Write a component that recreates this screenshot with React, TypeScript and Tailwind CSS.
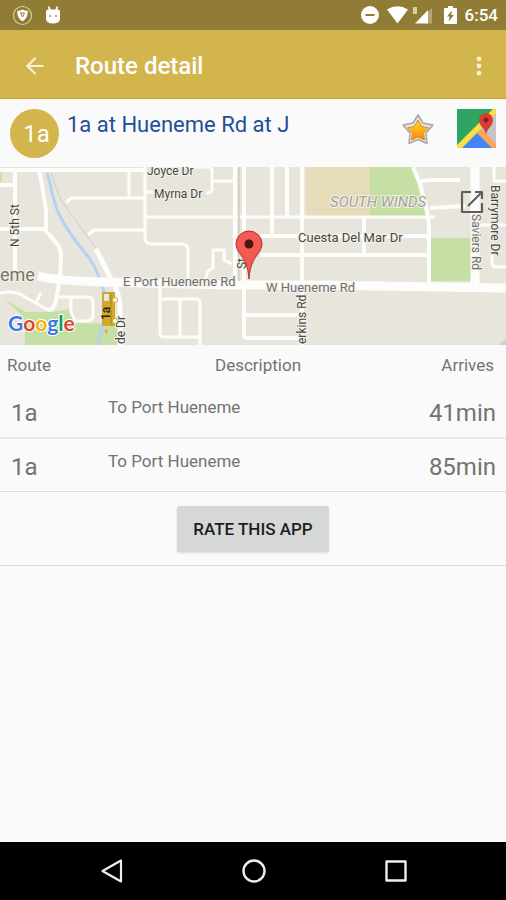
import { ArrowLeft } from "lucide-react";

type arrivalProps = {
  route: string;
  description: string;
  arrives: string;
}

function StatusBar() {
  return (
    <div className="flex h-[30px] items-center justify-between bg-[#917c35] px-2 text-white">
      <div className="flex items-center gap-3 pl-1">
        <svg width="21" height="21" viewBox="0 0 21 21" aria-hidden="true">
          <circle cx="10.5" cy="10.5" r="9" fill="none" stroke="#d9cda6" strokeWidth="1.2" />
          <path d="M10.5 4.5c1.6 1 3.4 1.2 5.2 1.3.3 5-1.5 8.500-5.200 10.500-3.700-2-5.500-5.500-5.200-10.500 1.800-.1 3.600-.3 5.200-1.300z" fill="#fff" />
          <path d="M8.500 8l2 4 2-4z" fill="none" stroke="#917c35" strokeWidth="1" />
        </svg>
        <svg width="16" height="18" viewBox="0 0 16 18" aria-hidden="true">
          <path d="M3.500 0.500l1.500 4M12.500 0.500l-1.500 4" stroke="#fff" strokeWidth="1.800" />
          <path d="M3 3.500h10q2 0 2 2v7q0 5-7 5t-7-5v-7q0-2 2-2z" fill="#fff" />
          <circle cx="5" cy="10" r="0.900" fill="#917c35" />
          <circle cx="11" cy="10" r="0.900" fill="#917c35" />
        </svg>
      </div>
      <div className="flex items-center gap-2">
        <svg width="18" height="18" viewBox="0 0 18 18" aria-hidden="true">
          <circle cx="9" cy="9" r="9" fill="#fff" />
          <path d="M4.500 9h9" stroke="#917c35" strokeWidth="2" />
        </svg>
        <svg width="21" height="18" viewBox="0 0 21 18" aria-hidden="true">
          <path d="M0 3.500Q10.500-3 21 3.500L10.500 17.500z" fill="#fff" />
        </svg>
        <svg width="20" height="18" viewBox="0 0 20 18" className="-ml-1" aria-hidden="true">
          <path d="M1 1h4v7h-4z" fill="#d9cda6" />
          <path d="M20 2v15.500h-5v-11z" fill="#b5a672" />
          <path d="M16 4v13.500h-13z" fill="#fff" />
        </svg>
        <svg width="13" height="18" viewBox="0 0 13 18" className="ml-1" aria-hidden="true">
          <path d="M4 0h5v2h3q1 0 1 1v14q0 1-1 1h-11q-1 0-1-1v-14q0-1 1-1h3z" fill="#fff" />
          <path d="M8 4.500l-5 6h2.700l-1 5 5.300-6.500h-2.800z" fill="#917c35" />
        </svg>
        <span className="text-[17px] leading-5 font-medium">6:54</span>
      </div>
    </div>
  )
}

function MapView() {
  return (
    <svg className="h-[178px] w-full" viewBox="0 0 506 178" preserveAspectRatio="xMidYMid slice" role="img" aria-label="Map">
      <rect width="506" height="178" fill="#e8e6dc" />
      <path d="M0 3h2v12h-2z" fill="#dfd8a5" />
      <path d="M306 0h65v49h-65z" fill="#e7dcb9" />
      <path d="M370 0h43l13 49h-56z" fill="#c5dfa5" />
      <path d="M431 71h40v43h-40z" fill="#c5dfa5" />
      <path d="M4 132l22 13 24 0 22-3 4 14 43 1v21h-94v-21l-3-9z" fill="#c5dfa5" />
      <path d="M498 178l8-6v6z" fill="#d2d2ce" />

      <path d="M47 6C52 20 52 32 59 47S75 74 90 92c8 12 11 24 16 38M103 156l-5 22" fill="none" stroke="#b5d0f5" strokeWidth="3" />
      <path d="M51 6c4 10 6 20 12 30l33 45" fill="none" stroke="#cfccc2" strokeWidth="1" />

      <g fill="none" stroke="#fdfdfb" strokeWidth="4" strokeLinejoin="round">
        <path d="M0 3h145M15 3v101M0 18h15M0 62h46" />
        <path d="M39 3l3 15 4 25v21l12 14q3 5 3 12l-1 20-4 24q-2 9-8 9" />
        <path d="M0 126q16-3 25 4l23 13M35 137l6-11M58 130h31q4 1 4 7v12q-1 5-6 5h-12l-4-9v-14" strokeWidth="3" />
        <path d="M66 36l5-5h74M88 68l6-5h51M129 3v29M145 0v71q0 5 5 6h33q5 1 5 6v34M145 25h8M145 50h290" strokeWidth="3" />
        <path d="M160 118v48q0 4 5 4h35M160 132h36q4 0 4 5v41M180 132v38" strokeWidth="3" />
        <path d="M185 0h23q4 0 4 4v18q0 4-6 4M213 14h22M205 114l3-10 5-3v-18h11v10l8 4" strokeWidth="3" />
        <path d="M96 82l15 30q9 14 9 30v36" strokeWidth="5" />
        <path d="M235 0v120M244 0v168q0 3 4 3h54M244 148h58M260 69h170M260 88h170" />
        <path d="M272 0v69M287 0v51M302 0v178M364 51v37" />
        <path d="M413 0l7 17 7 27 2 14v60M421 14l10-1h29M430 41l35-2" />
        <path d="M480 58h26M494 0v14h12M492 84v12q0 4 5 4h9" strokeWidth="3" />
        <path d="M475 0v120" strokeWidth="9" />
        <path d="M38 109q20 5 65 6l130 3 80 0 193 3" strokeWidth="9" />
      </g>
      <path d="M239 0v114" stroke="#d7d4ca" strokeWidth="2" />

      <g className="font-[Roboto,sans-serif] text-[12px]" fill="#464646" stroke="#f3f1ea" strokeWidth="2" paintOrder="stroke">
        <text x="147" y="8">Joyce Dr</text>
        <text x="154" y="31">Myrna Dr</text>
        <text x="298" y="75" className="text-[13px]">Cuesta Del Mar Dr</text>
        <text x="123" y="119" fill="#707070" className="text-[13px]">E Port Hueneme Rd</text>
        <text x="266" y="125" fill="#707070" className="text-[13px]">W Hueneme Rd</text>
        <text x="330" y="40" fill="#a5a39b" className="text-[15px] italic">SOUTH WINDS</text>
        <text x="-10" y="114" fill="#7d7463" className="text-[18px]">neme</text>
        <text transform="translate(19 80) rotate(-90)">N 5th St</text>
        <text transform="translate(125 177) rotate(-90)">de Dr</text>
        <text transform="translate(306 177) rotate(-90)">erkins Rd</text>
        <text transform="translate(246 102) rotate(-90)">St</text>
        <text transform="translate(472 47) rotate(90)" fill="#707070">Saviers Rd</text>
        <text transform="translate(491 18) rotate(90)">Barrymore Dr</text>
      </g>

      {/* bus */}
      <path d="M102 125h13v34h-13z" fill="#d3a72b" />
      <path d="M104 127h5v7h-5z" fill="#dbe9f0" />
      <path d="M111 126v32" stroke="#ad861f" />
      <circle cx="115" cy="133" r="2.500" fill="#fff" stroke="#d3a72b" />
      <circle cx="115" cy="154" r="2.500" fill="#fff" stroke="#d3a72b" />
      <path d="M104 164l4-2-1 5z" fill="#e0a52f" />
      <text transform="translate(110 153) rotate(-90)" className="font-[Roboto,sans-serif] text-[12px] font-medium" fill="#222">1a</text>

      {/* marker */}
      <path d="M249 112c-1-13-4-18-8-24-3-4-5-7-5-11a13 13 0 0 1 26 0c0 4-2 7-5 11-4 6-7 11-8 24z" fill="#f25a52" stroke="#b1302b" strokeWidth="1" />
      <circle cx="249" cy="77" r="4.500" fill="#4b1413" />

      {/* open in new */}
      <g fill="none" stroke="#5f5f5f" strokeWidth="2.200" strokeLinejoin="round">
        <path d="M471 25h-9v20h20v-9M475 25h7v7M482 25l-14 14" />
      </g>

      <text x="8" y="164" className="font-[Lato,sans-serif] text-[21px] font-bold" stroke="#fff" strokeWidth="2" paintOrder="stroke">
        <tspan fill="#3b78e7">G</tspan>
        <tspan fill="#db4437">o</tspan>
        <tspan fill="#f4b400">o</tspan>
        <tspan fill="#3b78e7">g</tspan>
        <tspan fill="#0f9d58">l</tspan>
        <tspan fill="#db4437">e</tspan>
      </text>
    </svg>
  )
}

export default function App() {
  const arrivals = [
    {
      route: "1a",
      description: "To Port Hueneme",
      arrives: "41min"
    },
    {
      route: "1a",
      description: "To Port Hueneme",
      arrives: "85min"
    },
  ]

  return (
    <div className="flex min-h-screen flex-col bg-[#fafafa] font-[Roboto,sans-serif] text-[#737373]">
      <StatusBar />
      <header className="flex h-[69px] items-center border-b border-[#c9a52e] bg-[#d3b54e] pt-[3px] pr-4 pl-[22px] text-white">
        <button aria-label="Back" className="text-[#fbf0cf]">
          <ArrowLeft size={26} strokeWidth={2} />
        </button>
        <h1 className="flex-1 pl-[27px] text-[24px] leading-8 font-medium">Route detail</h1>
        <button aria-label="More options" className="px-2">
          <svg width="6" height="20" viewBox="0 0 6 20" fill="#fbf0cf" aria-hidden="true">
            <circle cx="3" cy="2.800" r="2.400" />
            <circle cx="3" cy="10" r="2.400" />
            <circle cx="3" cy="17.200" r="2.400" />
          </svg>
        </button>
      </header>

      <main className="flex-1">
        <section className="flex h-[68px] items-start px-[10px] pt-[10px]">
          <span className="flex size-[49px] items-center justify-center rounded-full bg-[#d3b54e] pl-1 text-[24px] leading-8 text-white">1a</span>
          <h2 className="flex-1 pl-2 text-[22px] leading-8 text-[#1f4f96]">1a at Hueneme Rd at J</h2>
          <button aria-label="Favorite" className="mt-1 mr-[22px]">
            <svg width="34" height="34" viewBox="0 0 34 34" aria-hidden="true">
              <defs>
                <linearGradient id="star" x1="0" y1="0" x2="0" y2="1">
                  <stop offset="0" stopColor="#ffd92e" />
                  <stop offset="0.500" stopColor="#ffb414" />
                  <stop offset="1" stopColor="#f57c2a" />
                </linearGradient>
              </defs>
              <path d="M17 2l5 8 10 2-7 8 1 10.500-9-4-9 4 1-10.500-7-8 10-2z" fill="#e2e2e2" stroke="#a8a8a8" strokeWidth="1.500" strokeLinejoin="round" />
              <path d="M17 7l3.500 6.500 7 1.300-5 5.200 1 7-6.500-3-6.500 3 1-7-5-5.200 7-1.300z" fill="url(#star)" stroke="#e88a1a" strokeWidth="1" strokeLinejoin="round" />
            </svg>
          </button>
          <button aria-label="Open in maps">
            <svg width="39" height="39" viewBox="0 0 39 39" aria-hidden="true">
              <rect width="39" height="39" fill="#2ea562" />
              <path d="M39 5v34l-19-18z" fill="#c4c4c6" />
              <path d="M4 39l16-16 16 16z" fill="#4285f4" />
              <path d="M0 36L36 0h3v5L5 39h-5z" fill="#fbdd44" />
              <path d="M20 24l4-4 15 15v4h-4z" fill="#f9a65a" />
              <path d="M29 26c-1-7-7-9-7-15a7 7 0 0 1 14 0c0 6-6 8-7 15z" fill="#d93b30" />
              <circle cx="29" cy="11" r="2.500" fill="#7b231e" />
            </svg>
          </button>
        </section>

        <MapView />

        <table className="w-full table-fixed border-b border-[#dcdcdc]">
          <thead>
            <tr className="h-10 text-[17px] leading-6">
              <th className="w-[108px] pl-[7px] text-left font-normal">Route</th>
              <th className="text-center font-normal">Description</th>
              <th className="w-[98px] pr-3 text-right font-normal">Arrives</th>
            </tr>
          </thead>
          <tbody>
            {arrivals.map((arrival: arrivalProps) => (
              <tr key={arrival.arrives} className="h-[53px] border-b-2 border-[#e9e9e9] last:border-b-0">
                <td className="pt-1 pl-[11px] text-[24px] leading-8">{arrival.route}</td>
                <td className="pt-[10px] align-top text-[17px] leading-6">{arrival.description}</td>
                <td className="pt-1 pr-[10px] text-right text-[24px] leading-8">{arrival.arrives}</td>
              </tr>
            ))}
          </tbody>
        </table>

        <div className="flex justify-center border-b border-[#dcdcdc] pt-[14px] pb-[13px]">
          <button className="h-[46px] w-[152px] rounded-xs bg-[#d6d7d7] text-[17px] leading-6 font-medium text-[#1e1e1e] shadow-sm">RATE THIS APP</button>
        </div>
      </main>

      <nav className="flex h-[58px] items-center justify-center gap-[118px] bg-black pl-[2px]">
        <button aria-label="Back">
          <svg width="24" height="26" viewBox="0 0 24 26" fill="none" stroke="#eee" strokeWidth="2.200" strokeLinejoin="round" aria-hidden="true">
            <path d="M21 2.500v21L2.500 13z" />
          </svg>
        </button>
        <button aria-label="Home">
          <svg width="24" height="24" viewBox="0 0 24 24" fill="none" stroke="#eee" strokeWidth="2.400" aria-hidden="true">
            <circle cx="12" cy="12" r="10.500" />
          </svg>
        </button>
        <button aria-label="Recent apps">
          <svg width="24" height="24" viewBox="0 0 24 24" fill="none" stroke="#eee" strokeWidth="2.400" strokeLinejoin="round" aria-hidden="true">
            <path d="M2.500 2.500h19v19h-19z" />
          </svg>
        </button>
      </nav>
    </div>
  )
}
